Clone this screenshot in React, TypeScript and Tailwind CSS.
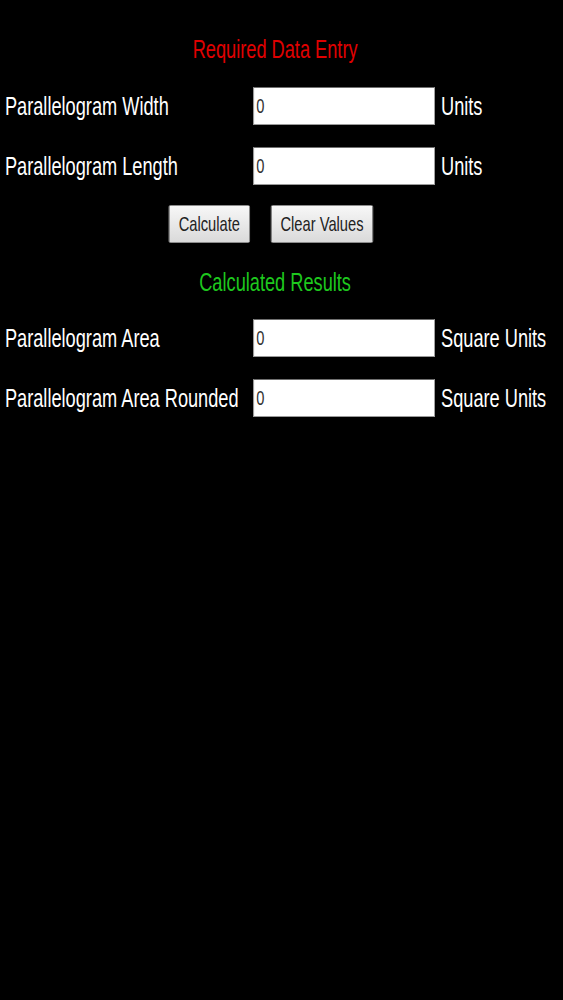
import React, { useState } from 'react';

type Row = { label: string; unit: string; value: string; onChange?: (v: string) => void; readOnly?: boolean };

const Field: React.FC<Row & { className?: string }> = ({ label, unit, value, onChange, readOnly, className }) => (
  <div className={`flex items-center h-[38px] ${className ?? ''}`}>
    <div className="w-[362px] pl-[7px] text-white text-[26px] leading-[30px] whitespace-nowrap">{label}</div>
    <input
      value={value}
      readOnly={readOnly}
      onChange={(e) => onChange?.(e.target.value)}
      className="w-[259px] h-[38px] bg-white border border-[#9a9a9a] border-t-[#6f6f6f] pl-[3px] text-[21px] text-[#333] outline-none"
      style={{ fontFamily: '"Liberation Sans", Arial, sans-serif' }}
    />
    <div className="ml-[9px] text-white text-[26px] leading-[30px] whitespace-nowrap">{unit}</div>
  </div>
);

const App: React.FC = () => {
  const [width, setWidth] = useState('0');
  const [length, setLength] = useState('0');
  const [area, setArea] = useState('0');
  const [rounded, setRounded] = useState('0');

  const calculate = () => {
    const a = (parseFloat(width) || 0) * (parseFloat(length) || 0);
    setArea(String(a));
    setRounded(String(Math.round(a)));
  };

  const clear = () => {
    setWidth('0');
    setLength('0');
    setArea('0');
    setRounded('0');
  };

  return (
    <div className="min-h-screen w-full bg-black overflow-hidden" style={{ fontFamily: '"Liberation Sans", Arial, sans-serif' }}>
      {/* page is shown horizontally squeezed, like the original capture */}
      <div className="w-[804px] origin-top-left scale-x-[0.7] pt-[34px]">
        <div className="w-[786px] flex flex-col">
          <h2 className="text-center text-[26px] leading-[30px] text-[#e00000]">Required Data Entry</h2>

          <Field className="mt-[23px]" label="Parallelogram Width" unit="Units" value={width} onChange={setWidth} />
          <Field className="mt-[22px]" label="Parallelogram Length" unit="Units" value={length} onChange={setLength} />

          <div className="mt-[20px] flex justify-center gap-[30px] pr-[12px]">
            <button
              onClick={calculate}
              className="w-[116px] h-[38px] rounded-[2px] border border-[#a5a5a5] bg-gradient-to-b from-[#f7f7f7] to-[#dadada] text-[21px] text-[#222]"
            >
              Calculate
            </button>
            <button
              onClick={clear}
              className="w-[146px] h-[38px] rounded-[2px] border border-[#a5a5a5] bg-gradient-to-b from-[#f7f7f7] to-[#dadada] text-[21px] text-[#222]"
            >
              Clear Values
            </button>
          </div>

          <h2 className="mt-[24px] text-center text-[26px] leading-[30px] text-[#1ec81e]">Calculated Results</h2>

          <Field className="mt-[22px]" label="Parallelogram Area" unit="Square Units" value={area} readOnly />
          <Field className="mt-[22px]" label="Parallelogram Area Rounded" unit="Square Units" value={rounded} readOnly />
        </div>
      </div>
    </div>
  );
};

export default App;
